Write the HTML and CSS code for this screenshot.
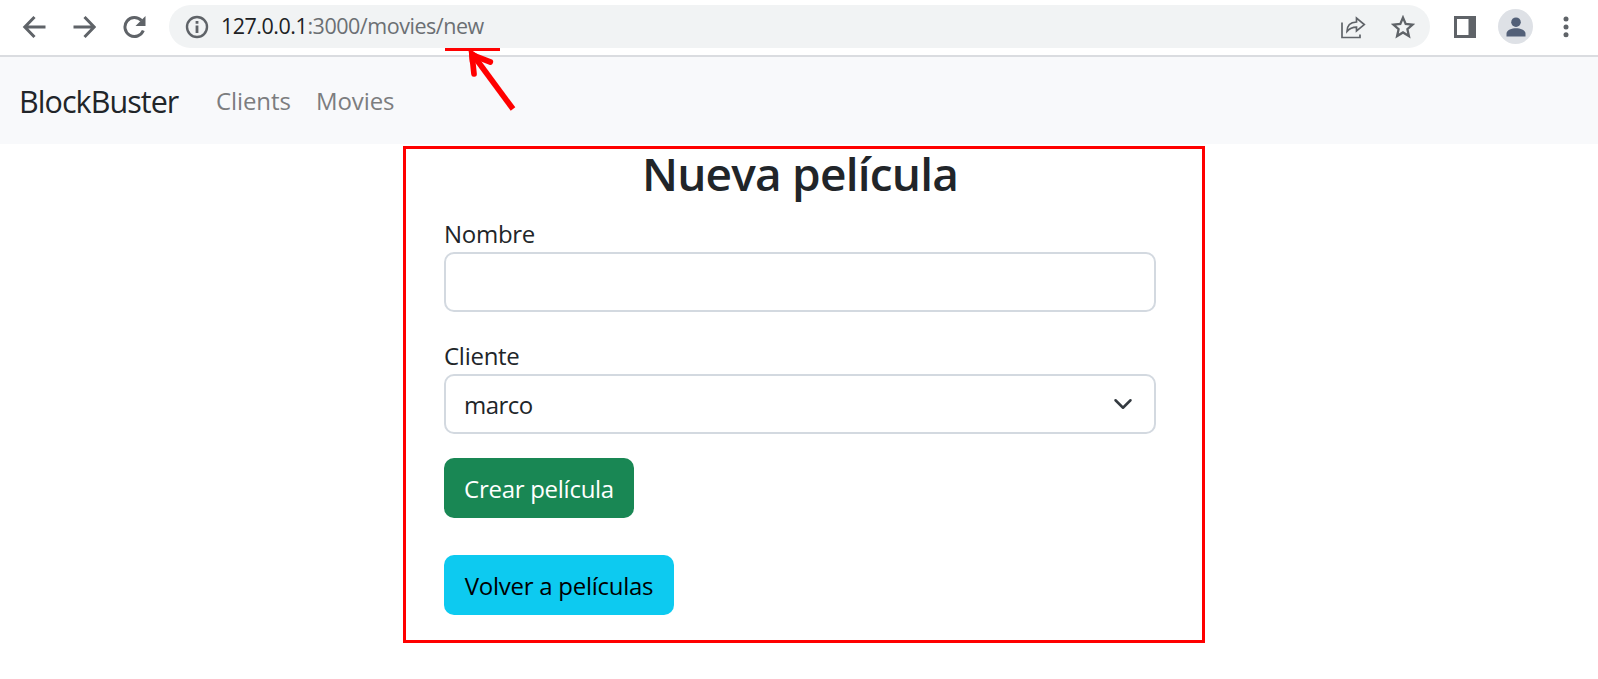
FILE: index.html
```html
<!DOCTYPE html>
<html lang="es">
<head>
<meta charset="utf-8">
<title>BlockBuster</title>
<link rel="stylesheet" href="styles.css">
</head>
<body>
<header class="toolbar">
  <div class="nav-buttons">
    <svg width="24" height="24" viewBox="0 0 24 24"><path d="M23.500 12H3M12.500 2 2.800 12l9.700 10" class="line"/></svg>
    <svg width="24" height="24" viewBox="0 0 24 24"><path d="M1.500 12H22M12.500 2l9.700 10-9.700 10" class="line"/></svg>
    <svg width="24" height="24" viewBox="0 0 24 24"><path d="M21.300 15.500A9.500 9.500 0 1 1 19.500 5.600" class="line"/><path d="M23.500 1v10h-10z" class="solid"/></svg>
  </div>
  <div class="address">
    <svg width="24" height="24" viewBox="0 0 24 24"><circle cx="12" cy="12" r="10" class="line thin"/><path d="M10.600 10.500h2.800V18h-2.800zM10.600 6h2.800v2.700h-2.800z" class="solid"/></svg>
    <span class="url"><b>127.0.0.1</b>:3000/movies/new</span>
    <svg class="share" width="26" height="26" viewBox="0 0 26 26"><path d="M2 8.500V23.500h18V20.500" class="line fine"/><path d="M7 17.500c0-6 3.500-9.300 9.500-9.500V4l7.800 6.600-7.800 6.400v-3.800c-4.500 0-7 1.300-9.500 4.300z" class="line fine"/></svg>
    <svg class="star" width="24" height="24" viewBox="0 0 24 24"><path d="m12 2.600 2.700 6.400 6.900.6-5.200 4.600 1.500 6.800-5.900-3.600L6.100 21l1.500-6.800-5.200-4.600L9.300 9z" class="line starline"/></svg>
  </div>
  <div class="actions">
    <svg width="22" height="22" viewBox="0 0 22 22"><path fill-rule="evenodd" d="M0 0h22v22H0zM3 3v16h11.500V3z" class="solid"/></svg>
    <span class="avatar"><svg width="20" height="20" viewBox="0 0 20 20"><circle cx="10" cy="5.200" r="4.800"/><path d="M.5 19.500v-2.800C.5 13 6 11.300 10 11.300s9.500 1.700 9.500 5.400v2.800z"/></svg></span>
    <svg width="6" height="22" viewBox="0 0 6 22"><g class="solid"><circle cx="3" cy="3" r="2.500"/><circle cx="3" cy="11" r="2.500"/><circle cx="3" cy="18.800" r="2.500"/></g></svg>
  </div>
</header>
<svg class="annotation" width="75" height="66" viewBox="0 0 75 66"><path d="M0 1.500h55" stroke-width="3"/><path d="M68 61 28.500 7.500" stroke-width="5.700"/><path d="M29 26 27 6.800 45.300 14" stroke-width="5.700" stroke-linecap="round"/><path d="M23.800 3h4l5 3.500-8 8z" class="tip"/></svg>
<nav class="navbar">
  <a class="brand">BlockBuster</a>
  <a class="link clients">Clients</a>
  <a class="link movies">Movies</a>
</nav>
<main class="panel">
  <h1><span>Nueva película</span></h1>
  <form>
    <label class="nombre" for="nombre">Nombre</label>
    <input id="nombre" class="control" type="text">
    <label class="cliente">Cliente</label>
    <div class="control select"><span>marco</span><svg width="20" height="20" viewBox="0 0 16 16"><path d="m2 5 6 6 6-6"/></svg></div>
    <button type="button" class="btn create"><span>Crear película</span></button>
    <a class="btn back"><span>Volver a películas</span></a>
  </form>
</main>
</body>
</html>
```
FILE: styles.css
```css
* { box-sizing: border-box; }
body { margin: 0; height: 679px; overflow: hidden; background: #fff; color: #212529; font-family: "Open Sans", "Noto Sans", sans-serif; font-size: 24px; letter-spacing: -0.27px; }
svg { display: block; flex: none; }
.line { fill: none; stroke: #5f6368; stroke-width: 3; }
.line.thin { stroke-width: 2.4; }
.line.fine { stroke-width: 1.7; }
.line.starline { stroke-width: 2.3; }
.solid { fill: #5f6368; }
.toolbar { display: flex; height: 57px; padding: 5px 29px 0 22px; border-bottom: 2px solid #dadce0; align-items: flex-start; }
.nav-buttons { display: flex; gap: 26px; height: 43px; align-items: center; width: 147px; }
.address { display: flex; align-items: center; width: 1262px; height: 43px; padding: 0 15px 0 16px; border-radius: 22px; background: #f1f3f4; }
.url { margin: -1px 0 0 12px; font-size: 21.5px; line-height: 30px; color: #6b6f73; letter-spacing: -0.47px; white-space: nowrap; }
.url b { font-weight: 400; color: #202124; }
.share { margin-left: auto; }
.star { margin-left: 25px; }
.actions { display: flex; align-items: center; height: 43px; margin-left: 24px; }
.avatar { display: grid; place-items: center; width: 35px; height: 35px; margin: 0 30px 0 22px; border-radius: 50%; background: #dee1e6; fill: #536078; }
.annotation { position: absolute; left: 445px; top: 48px; fill: none; stroke: #f00; }
.annotation .tip { fill: #f00; stroke: none; }
.navbar { display: flex; align-items: center; height: 87px; padding: 1px 20px 0 19px; background: #f8f9fb; white-space: nowrap; }
.brand { width: 197px; font-size: 30.5px; line-height: 46px; letter-spacing: -0.95px; }
.link { color: #7c7d7f; line-height: 38px; letter-spacing: -0.1px; }
.clients { width: 100px; }
.panel { width: 802px; height: 497px; margin: 2px 0 0 403px; padding: 0 46px 0 38px; border: 3px solid #f00; }
h1 { margin: 0; height: 60px; font-size: 46px; line-height: 48px; font-weight: 600; text-align: center; letter-spacing: -0.8px; white-space: nowrap; }
form { display: flex; flex-direction: column; align-items: flex-start; }
label { height: 43px; line-height: 49px; }
.control { width: 712px; height: 60px; border: 2px solid #d3d9e0; border-radius: 10px; background: #fff; }
.cliente { margin-top: 19px; }
.select { display: flex; align-items: center; justify-content: space-between; padding: 0 21px 0 18px; letter-spacing: -0.5px; }
.select path { fill: none; stroke: #343a40; stroke-width: 2; stroke-linecap: round; stroke-linejoin: round; }
.btn { display: flex; align-items: center; justify-content: center; height: 60px; padding: 0; border: 0; border-radius: 10px; font: inherit; letter-spacing: inherit; white-space: nowrap; }
.create { width: 190px; margin-top: 24px; background: #198754; color: #fff; }
.back { width: 230px; margin-top: 37px; background: #0dcaf0; color: #000; }
```
